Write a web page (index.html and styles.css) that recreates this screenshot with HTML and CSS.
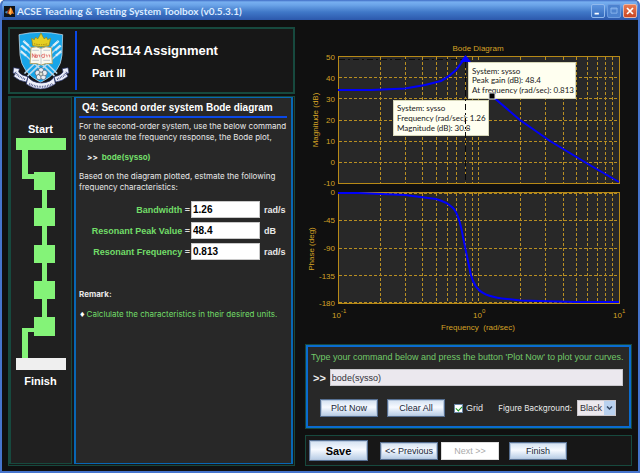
FILE: index.html
```html
<!DOCTYPE html>
<html lang="en">
<head>
<meta charset="utf-8">
<title>ACSE Teaching &amp; Testing System Toolbox (v0.5.3.1)</title>
<link rel="stylesheet" href="styles.css">
</head>
<body>
<div class="window">
  <header class="titlebar">
    <svg class="app-icon" viewBox="0 0 33 33" aria-hidden="true">
      <rect width="33" height="33" fill="#101418"/>
      <path d="M2 18 11 14 16 17 9 23Z" fill="#3f8fc0"/>
      <path d="M11 14C15 11 17 5 20 4L16 21 9 23Z" fill="#9c2f1c"/>
      <path d="M20 4C24 6 26 18 31 24 26 21 24 22 19 28 17 24 14 21 11 23 16 20 17 9 20 4Z" fill="#f08024"/>
      <path d="M20 4C22 8 22 18 19 28 17 24 16 22 14 21 18 16 18 9 20 4Z" fill="#ffc04c"/>
    </svg>
    <h1 class="window-title">ACSE Teaching &amp; Testing System Toolbox (v0.5.3.1)</h1>
    <div class="window-controls">
      <button class="win-btn" type="button" aria-label="Minimize"><svg viewBox="0 0 14 14"><path d="M3 10h5" stroke="#fff" stroke-width="2"/></svg></button>
      <button class="win-btn win-btn-dim" type="button" aria-label="Maximize"><svg viewBox="0 0 14 14"><path d="M3.5 3.500h7v6h-7zM3 4.500h8" fill="none" stroke="#8db9f0"/></svg></button>
      <button class="win-btn win-btn-close" type="button" aria-label="Close"><svg viewBox="0 0 14 14"><path d="M3.500 3.500l7 7M10.500 3.500l-7 7" stroke="#fff" stroke-width="2"/></svg></button>
    </div>
  </header>

  <main class="content">
    <div class="column">
      <section class="panel banner">
        <svg class="crest" viewBox="0 0 174 180" role="img" aria-label="University crest">
          <path d="M21 11Q84-3 152 11L150 72Q147 125 86 154 29 126 24 72Z" fill="#18a5e8" stroke="#d9e9f5" stroke-width="2"/>
          <g stroke="#b9d9ee" stroke-width="5" stroke-linecap="round">
            <path d="M39 34 134 126M32 45 126 134M27 60 98 126M134 34 39 126M142 45 48 134M147 60 76 126"/>
          </g>
          <path d="M34 30 50 44M28 44 44 58M27 62 42 74M140 30 124 44M146 44 130 58M147 62 132 74" stroke="#edf6fb" stroke-width="7" stroke-dasharray="3 1"/>
          <path d="M62 44 59 22 67 26 71 18 77 24 82 16 87 6 92 16 97 24 103 18 107 26 116 22 111 44Q86 50 62 44Z" fill="#e6cf22" stroke="#8f8018" stroke-width="2"/>
          <path d="M66 38Q86 44 108 38" fill="none" stroke="#a88716" stroke-width="3" stroke-dasharray="4 3"/>
          <path d="M57 50Q73 44 87 52 101 44 118 50L121 98Q102 95 88 102 73 95 54 98Z" fill="#faf9ef" stroke="#b5a366" stroke-width="3"/>
          <path d="M87 52V101M61 58h20M94 58h20M61 88h20M94 88h20" stroke="#a9b5c3" stroke-width="2"/>
          <path d="M61 80V68l8 12V68M71 72h5v7h-5zM79 72h4v7M95 70q-8 0-6 6 2 7 8 3V68M101 72h4v7M109 72h4v7" fill="none" stroke="#d84444" stroke-width="2"/>
          <g fill="#e9edf2" stroke="#47536b" stroke-width="2">
            <circle cx="87" cy="118" r="8"/><circle cx="77" cy="126" r="8"/><circle cx="81" cy="138" r="8"/><circle cx="94" cy="138" r="8"/><circle cx="98" cy="126" r="8"/>
          </g>
          <circle cx="87" cy="129" r="6" fill="#dce0d1" stroke="#4e5b63" stroke-width="2"/>
          <path d="M5 110 22 113 20 123Q28 134 48 137L43 153Q22 151 5 136L10 128 3 126ZM168 110 151 113 153 123Q146 134 126 137L131 153Q151 151 168 136L163 128 171 126ZM48 137 43 159Q84 189 130 159L126 137Q119 154 88 156 58 154 48 137Z" fill="#eef0fa" stroke="#29356c" stroke-width="2"/>
          <path d="M10 123 18 134 39 145M164 123 156 134 135 145" fill="none" stroke="#303d78" stroke-width="6" stroke-dasharray="2 3"/>
          <path d="M52 158Q87 177 122 158" fill="none" stroke="#303d78" stroke-width="6" stroke-dasharray="2 3"/>
        </svg>
        <div class="banner-rule"></div>
        <div class="banner-text">
          <h2 class="assignment">ACS114 Assignment</h2>
          <p class="part">Part III</p>
        </div>
      </section>

      <div class="panel workspace">
        <aside class="progress">
          <h3 class="progress-label">Start</h3>
          <svg class="progress-track" viewBox="0 0 50 232" role="img" aria-label="Five steps between start and finish">
            <path d="M0 0h50v12H12v24h6v-2h21v18h-8v18h8v18h-8v19h8v18h-8v18h8v18h-8v18h8v19H18v-4h-6v26H6V190h12v-11h8v-18h-8v-18h8v-18h-8v-18h8V88h-8V70h8V52h-8V41H6V12H0z" fill="#84f378"/>
            <path d="M0 220h50v12H0z" fill="#efefef"/>
          </svg>
          <h3 class="progress-label">Finish</h3>
        </aside>

        <section class="question">
          <h2 class="question-title">Q4: Second order system Bode diagram</h2>
          <p class="prose">For the second-order system, use the below command<br>to generate the frequency response, the Bode plot,</p>
          <p class="command"><span class="prompt">&gt;&gt;</span> bode(sysso)</p>
          <p class="prose">Based on the diagram plotted, estmate the following<br>frequency characteristics:</p>
          <form class="answers">
            <label for="bandwidth">Bandwidth <span>=</span></label>
            <input id="bandwidth" type="text" value="1.26"><span class="unit">rad/s</span>
            <label for="peak">Resonant Peak Value <span>=</span></label>
            <input id="peak" type="text" value="48.4"><span class="unit">dB</span>
            <label for="frequency">Resonant Frequency <span>=</span></label>
            <input id="frequency" type="text" value="0.813"><span class="unit">rad/s</span>
          </form>
          <h3 class="remark">Remark:</h3>
          <ul class="remarks"><li>Calclulate the characteristics in their desired units.</li></ul>
        </section>
      </div>
    </div>

    <div class="column">
      <svg class="plot" viewBox="305 27 327 310" role="img" aria-label="Bode diagram">
        <rect class="plot-area" x="338.500" y="56.500" width="281" height="127"/>
        <rect class="plot-area" x="338.500" y="192.500" width="281" height="111"/>
        <path class="grid-line" d="M380.500 57V183M405.500 57V183M422.500 57V183M436.500 57V183M447.500 57V183M456.500 57V183M465.500 57V183M472.500 57V183M478.500 57V183M520.500 57V183M545.500 57V183M563.500 57V183M576.500 57V183M587.500 57V183M597.500 57V183M605.500 57V183M612.500 57V183"/>
        <path class="grid-line" d="M380.500 193V303M405.500 193V303M422.500 193V303M436.500 193V303M447.500 193V303M456.500 193V303M465.500 193V303M472.500 193V303M478.500 193V303M520.500 193V303M545.500 193V303M563.500 193V303M576.500 193V303M587.500 193V303M597.500 193V303M605.500 193V303M612.500 193V303"/>
        <path class="grid-line" d="M339 77.500H619M339 98.500H619M339 120.500H619M339 141.500H619M339 162.500H619M339 220.500H619M339 248.500H619M339 275.500H619M339 302.500H619M339 193.500H619"/>
        <path d="M339 59.500H465" class="peak-line"/>
        <path class="curve" d="M338 90H371L405 88.500Q424 86 441 81 449 77 456 70 462 62 465 58 470 62 475 72 483 86 492 96L520 120 550 141 588 164 619 182"/>
        <path class="curve" d="M338 193H358L405 195 436 199Q447 202 453 208 459 214 463 237L469 266Q472 284 479 290 486 297 507 299L521 300.500 576 302H619"/>
        <path d="M460 62 465.500 55 471 62Z" fill="#00f"/>
        <g class="tip">
          <rect x="468.500" y="62.500" width="107" height="36"/>
          <text x="472" y="74">System: sysso</text>
          <text x="472" y="83">Peak gain (dB): 48.4</text>
          <text x="472" y="93">At frequency (rad/sec): 0.813</text>
        </g>
        <g class="tip">
          <rect x="393.500" y="100.500" width="95" height="35"/>
          <text x="397" y="111">System: sysso</text>
          <text x="397" y="121">Frequency (rad/sec): 1.26</text>
          <text x="397" y="131">Magnitude (dB): 30.8</text>
        </g>
        <path d="M465.500 62V183" class="peak-line"/>
        <rect x="489" y="93" width="6" height="6" fill="#000" stroke="#ddd"/>
        <g class="axis-text">
          <text x="478" y="51" text-anchor="middle">Bode Diagram</text>
          <g text-anchor="end">
            <text x="335" y="60">50</text><text x="335" y="81">40</text><text x="335" y="102">30</text><text x="335" y="123">20</text><text x="335" y="144">10</text><text x="335" y="165">0</text><text x="335" y="186">-10</text>
            <text x="335" y="195">0</text><text x="335" y="223">-45</text><text x="335" y="251">-90</text><text x="335" y="279">-135</text><text x="335" y="306">-180</text>
          </g>
          <text x="332" y="318">10<tspan class="exponent" dy="-5">-1</tspan></text>
          <text x="473" y="318">10<tspan class="exponent" dy="-5">0</tspan></text>
          <text x="613" y="318">10<tspan class="exponent" dy="-5">1</tspan></text>
          <text x="441" y="330" xml:space="preserve">Frequency  (rad/sec)</text>
          <text transform="translate(318 120) rotate(-90)" text-anchor="middle">Magnitude (dB)</text>
          <text transform="translate(314 249) rotate(-90)" text-anchor="middle">Phase (deg)</text>
        </g>
      </svg>

      <form class="console">
        <label class="console-hint" for="command">Type your command below and press the button 'Plot Now' to plot your curves.</label>
        <div class="console-line">
          <span class="console-prompt">&gt;&gt;</span>
          <input id="command" class="console-input" type="text" value="bode(sysso)">
        </div>
        <div class="console-actions">
          <button class="btn" type="button">Plot Now</button>
          <button class="btn" type="button">Clear All</button>
          <label class="check"><input type="checkbox" checked>Grid</label>
          <label class="background-label" for="background">Figure Background:</label>
          <select id="background" class="background-select"><option>Black</option></select>
        </div>
      </form>

      <nav class="panel nav">
        <button class="btn btn-save" type="button">Save</button>
        <button class="btn" type="button">&lt;&lt; Previous</button>
        <button class="btn" type="button" disabled>Next &gt;&gt;</button>
        <button class="btn btn-finish" type="button">Finish</button>
      </nav>
    </div>
  </main>
</div>
</body>
</html>
```

FILE: styles.css
```css
* { box-sizing: border-box; }

body {
  margin: 0;
  background: #fff;
  color: #e8e8e8;
  font-family: "Liberation Sans", Arial, sans-serif;
  font-size: 9px;
}

h1, h2, h3, p, ul { margin: 0; padding: 0; }

button, input, select { font-family: inherit; margin: 0; }

.window {
  display: flex;
  flex-direction: column;
  min-height: 100vh;
  border: 2px solid #4674cc;
  border-top: 0;
  border-radius: 5px 5px 0 0;
  background: #101010;
  overflow: hidden;
}

.titlebar {
  display: flex;
  align-items: center;
  height: 20px;
  padding: 2px 1px 0 2px;
  background: linear-gradient(#3f6cc4, #77aff0 2px, #6ba4e8 5px, #4078c8 12px, #2c58ac);
}

.app-icon { width: 11px; height: 11px; margin-right: 2px; }

.window-title {
  flex: 1;
  color: #dcecff;
  font-family: Lato, "Open Sans", sans-serif;
  font-size: 10px;
  font-weight: 700;
  line-height: 16px;
  white-space: nowrap;
}

.window-controls { display: flex; gap: 2px; }

.win-btn {
  width: 14px;
  height: 14px;
  padding: 0;
  border: 1px solid #91b9ed;
  border-radius: 2px;
  background: linear-gradient(#5c94df, #356cbe);
}

.win-btn svg { display: block; width: 12px; height: 12px; }
.win-btn-dim { border-color: #6c9ce0; background: #4c82cf; }
.win-btn-close { border-color: #e7b5a8; background: linear-gradient(#e77a52, #c94724); }

.content {
  flex: 1;
  display: grid;
  grid-template-columns: 287fr 327fr;
  gap: 10px;
  padding: 7px 6px 5px;
}

.column { display: flex; flex-direction: column; min-width: 0; }

.panel { border: 1px solid #17493e; background: #171717; }

.banner {
  display: flex;
  align-items: center;
  height: 67px;
  margin-bottom: 2px;
  padding: 1px 2px;
  border-width: 2px;
}

.crest { width: 58px; height: 60px; }
.banner-rule { align-self: stretch; width: 2px; margin: 1px 15px 1px 5px; background: #0a48e8; }
.banner-text { color: #fff; font-weight: bold; }
.assignment { font-size: 13px; line-height: 18px; margin-bottom: 6px; }
.part { font-size: 11px; line-height: 14px; }

.workspace {
  flex: 1;
  display: grid;
  grid-template-columns: 63px minmax(0, 1fr);
  gap: 2px;
  padding: 0 1px 1px 0;
}

.progress {
  display: flex;
  flex-direction: column;
  align-items: center;
  padding: 24px 1px 0 0;
  border: solid #17493e;
  border-width: 1px 1px 1px 2px;
  background: #202020;
}

.progress-label { color: #fff; font-size: 11px; line-height: 14px; }
.progress-track { width: 50px; height: 232px; margin: 2px 0 4px; }

.question {
  padding: 2px 4px 2px 3px;
  border: 2px solid #0867b4;
  border-width: 1px 2px;
  background: #282828;
}

.question-title {
  margin-bottom: 3px;
  padding: 0 3px;
  border-bottom: 2px solid #0a48e8;
  color: #fff;
  font-size: 10px;
  line-height: 16px;
  white-space: nowrap;
}

.prose, .command, .remark, .remarks, .background-label {
  font-family: Inter, "Liberation Sans", sans-serif;
  font-size: 8px;
}

.prose { line-height: 11px; white-space: nowrap; }
.command { padding: 7px 8px; color: #72dd68; font-weight: bold; line-height: 14px; }
.prompt { margin-right: 2px; color: #eee; }

.answers {
  display: grid;
  grid-template-columns: 112px 69px 1fr;
  grid-auto-rows: 17px;
  align-items: center;
  row-gap: 4px;
  margin-top: 8px;
  font-weight: bold;
}

.answers label { color: #72dd68; font-size: 9px; text-align: right; white-space: nowrap; padding-right: 1px; }
.answers label span { color: #ddd; }

.answers input {
  width: 100%;
  height: 17px;
  padding: 0 1px;
  border: 1px solid #c8c8c8;
  background: #fff;
  color: #000;
  font-size: 10px;
  font-weight: bold;
}

.unit { padding-left: 4px; font-size: 9px; }
.remark { margin-top: 27px; line-height: 14px; }
.remarks { margin-top: 7px; list-style: none; color: #72dd68; line-height: 12px; white-space: nowrap; }
.remarks li::before { content: "♦"; margin: 0 2px 0 1px; color: #fff; font-size: 9px; }

.plot { display: block; width: 100%; height: auto; }
.plot-area { fill: #282828; stroke: #b78917; }
.grid-line { fill: none; stroke: #b98f22; stroke-dasharray: 3 2; }
.peak-line { fill: none; stroke: #090909; stroke-dasharray: 6 3 2 3; }
.curve { fill: none; stroke: #0000fa; stroke-width: 2; }
.tip rect { fill: #fffff0; stroke: #d6d6b8; }
.tip text { fill: #181818; font-family: Lato, "Liberation Sans", sans-serif; font-size: 8px; }
.axis-text { fill: #d4a226; font-size: 8px; }
.exponent { font-size: 6px; }

.console {
  margin: 7px 0 6px;
  padding: 5px 6px 9px 3px;
  border: 3px solid #0a6cd0;
  outline: 1px solid #17493e;
  outline-offset: -1px;
  background: #282828;
}

.console-hint { display: block; color: #72c868; font-size: 9px; line-height: 11px; white-space: nowrap; }
.console-line { display: flex; align-items: center; gap: 4px; margin: 6px 0 13px; padding-left: 2px; }
.console-prompt { color: #eee; font-size: 11px; font-weight: bold; }

.console-input {
  flex: 1;
  min-width: 0;
  height: 17px;
  padding: 0 1px;
  border: 1px solid #c9c7cc;
  background: #ebe8ee;
  color: #303038;
  font-size: 9px;
}

.console-actions { display: flex; align-items: center; gap: 9px; padding: 0 7px 0 9px; }

.btn {
  width: 58px;
  height: 18px;
  padding: 0;
  border: 1px solid #566f91;
  outline: 1px solid #b7c8de;
  outline-offset: -2px;
  background: linear-gradient(#d3e1f1, #f7faff 45%, #b5cbe5);
  color: #202638;
  font-size: 9px;
  white-space: nowrap;
}

.btn:disabled { border-color: #ddd; outline: 0; background: #fff; color: #aaa; }

.check { display: flex; align-items: center; gap: 3px; }

.check input {
  appearance: none;
  display: grid;
  place-items: center;
  width: 9px;
  height: 9px;
  border: 1px solid #6a86a8;
  background: #fff;
}

.check input:checked::after {
  content: "";
  width: 5px;
  height: 3px;
  border: solid #149522;
  border-width: 0 0 1px 1px;
  transform: rotate(-45deg);
}

.background-label { margin-left: auto; white-space: nowrap; }

.background-select {
  appearance: none;
  width: 39px;
  height: 16px;
  margin-left: -4px;
  padding: 0 0 0 2px;
  border: 1px solid #c9c7cc;
  border-radius: 0;
  background:
    url("data:image/svg+xml,%3Csvg xmlns='http://www.w3.org/2000/svg' viewBox='0 0 11 14'%3E%3Crect width='11' height='14' fill='%23b9d1ee'/%3E%3Cpath d='M3 5.500l2.500 2.500 2.500-2.500' fill='none' stroke='%23334763' stroke-width='1.500'/%3E%3C/svg%3E") right center / 11px 14px no-repeat,
    #ebe8ee;
  color: #303038;
  font-size: 9px;
}

.nav { display: flex; align-items: center; gap: 3px; height: 31px; padding: 0 3px; }
.btn-save { width: 59px; height: 21px; margin-right: 9px; color: #000; font-size: 11px; font-weight: bold; }
.btn-finish { margin-left: 7px; }
```
